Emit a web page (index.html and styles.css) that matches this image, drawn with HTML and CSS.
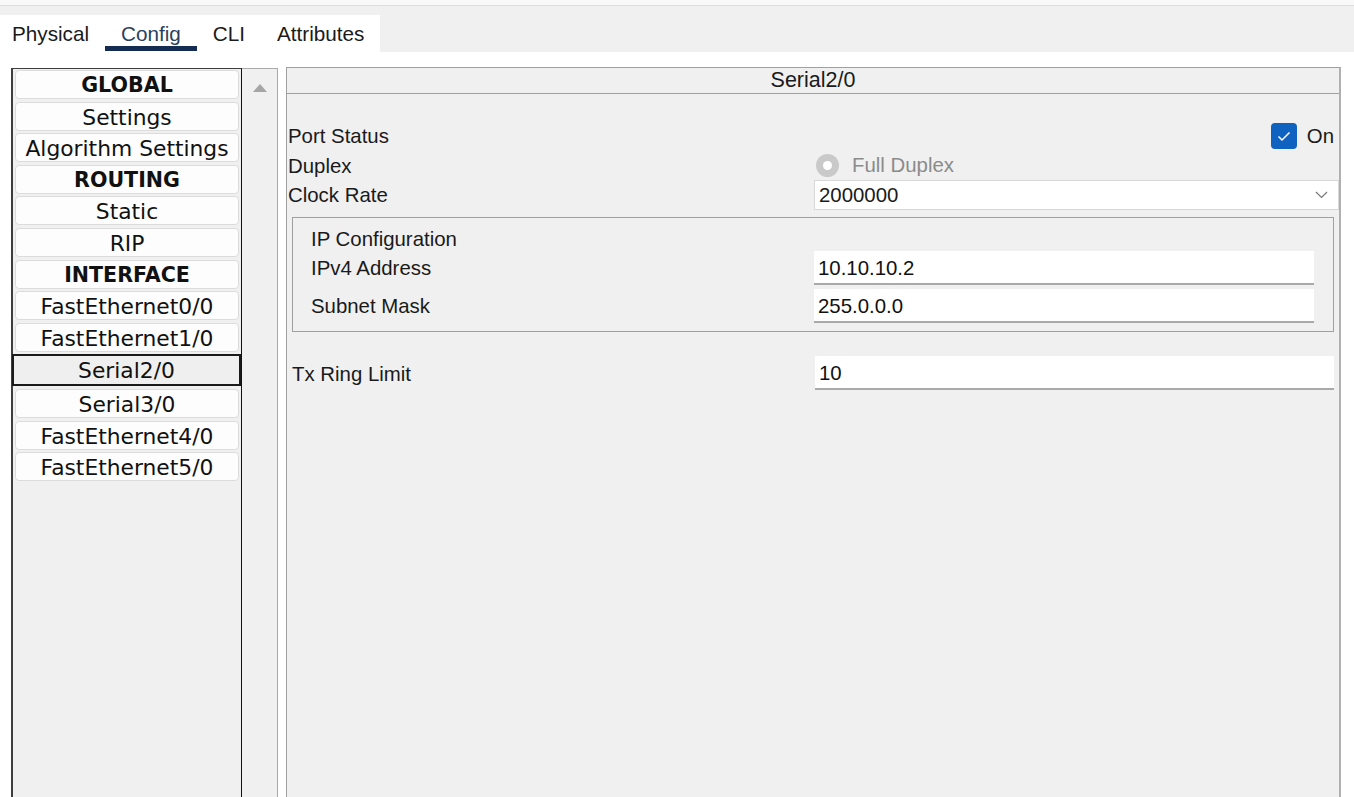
FILE: index.html
```html
<!DOCTYPE html>
<html>
<head>
<meta charset="utf-8">
<link rel="stylesheet" href="styles.css">
</head>
<body>
<div class="topstrip"></div>
<div class="tabbar">
  <div class="tabs">
    <div class="tab first">Physical</div>
    <div class="tab active">Config</div>
    <div class="tab">CLI</div>
    <div class="tab">Attributes</div>
  </div>
</div>
<div class="main">
  <div class="navlist">
    <div class="item bold">GLOBAL</div>
    <div class="item">Settings</div>
    <div class="item">Algorithm Settings</div>
    <div class="item bold">ROUTING</div>
    <div class="item">Static</div>
    <div class="item">RIP</div>
    <div class="item bold">INTERFACE</div>
    <div class="item">FastEthernet0/0</div>
    <div class="item">FastEthernet1/0</div>
    <div class="item selected">Serial2/0</div>
    <div class="item">Serial3/0</div>
    <div class="item">FastEthernet4/0</div>
    <div class="item">FastEthernet5/0</div>
  </div>
  <div class="scrollbar">
    <svg class="arrow" width="14" height="8" viewBox="0 0 14 8"><polygon points="0,8 7,0 14,8" fill="#a5a5a5"/></svg>
  </div>
  <div class="panel">
    <div class="panel-head">Serial2/0</div>
    <div class="panel-body">
      <div class="row">
        <div class="label">Port Status</div>
        <div class="value right">
          <span class="checkbox"><svg width="26" height="26" viewBox="0 0 26 26"><path d="M7.5 13.5 L11 17 L18.5 9.5" fill="none" stroke="#fff" stroke-width="1.5"/></svg></span>
          <span class="on">On</span>
        </div>
      </div>
      <div class="row">
        <div class="label">Duplex</div>
        <div class="value">
          <span class="radio"><span class="dot"></span></span>
          <span class="disabled">Full Duplex</span>
        </div>
      </div>
      <div class="row">
        <div class="label">Clock Rate</div>
        <div class="value">
          <div class="select">
            <span>2000000</span>
            <svg width="13" height="8" viewBox="0 0 13 8"><path d="M1 1 L6.5 6.5 L12 1" fill="none" stroke="#777" stroke-width="1.2"/></svg>
          </div>
        </div>
      </div>
      <div class="fieldset">
        <div class="legend">IP Configuration</div>
        <div class="frow">
          <div class="flabel">IPv4 Address</div>
          <div class="input">10.10.10.2</div>
        </div>
        <div class="frow">
          <div class="flabel">Subnet Mask</div>
          <div class="input">255.0.0.0</div>
        </div>
      </div>
      <div class="txrow">
        <div class="txlabel">Tx Ring Limit</div>
        <div class="input wide">10</div>
      </div>
    </div>
  </div>
</div>
</body>
</html>
```
FILE: styles.css
```css
* { box-sizing: border-box; }
html, body { margin: 0; padding: 0; }
body {
  background: #ffffff;
  font-family: "Liberation Sans", Arial, sans-serif;
  color: #1a1a1a;
  width: 1354px;
  height: 797px;
  overflow: hidden;
}
.topstrip {
  height: 6px;
  background: #f9f9f9;
  border-bottom: 1px solid #dcdcdc;
}
.tabbar {
  background: #f0f0f0;
  padding-top: 9px;
  height: 46px;
}
.tabs {
  display: flex;
  width: 380px;
  height: 37px;
  background: #ffffff;
}
.tab {
  padding: 7px 16px 0;
  height: 36px;
  line-height: 24px;
  font-size: 20.7px;
  border-bottom: 5px solid transparent;
  color: #1a1a1a;
}
.tab.first { padding-left: 12px; }
.tab.active {
  border-bottom-color: #142c52;
  color: #2a3f60;
}
.main {
  display: flex;
  align-items: flex-start;
  padding: 15px 0 0 11px;
  height: 745px;
  overflow: hidden;
}
.navlist {
  width: 231px;
  height: 760px;
  margin-top: 1px;
  background: #f0f0f0;
  border-left: 2px solid #3e3e3e;
  border-top: 1px solid #3e3e3e;
  border-right: 1px solid #111;
  padding: 1px 2px 0 2px;
  display: flex;
  flex-direction: column;
  gap: 2.6px;
  font-family: "DejaVu Sans", Verdana, sans-serif;
}
.item {
  height: 29px;
  line-height: 29px;
  text-align: center;
  font-size: 21.8px;
  color: #111;
  background: #fdfdfd;
  border: 1px solid #dcdcdc;
  border-radius: 4px;
  white-space: nowrap;
}
.item.bold { font-weight: bold; font-size: 20.6px; }
.item.selected {
  height: 32px;
  line-height: 29px;
  margin: 0 -2px 0 -3px;
  background: #efefef;
  border: 2px solid #1a1a1a;
  border-radius: 0;
}
.scrollbar {
  width: 36px;
  height: 760px;
  margin-top: 1px;
  background: #f0f0f0;
  border-top: 1px solid #aaaaaa;
  border-right: 1px solid #a8a8a8;
  display: flex;
  justify-content: center;
  padding-top: 15px;
}
.panel {
  margin-left: 8px;
  width: 1055px;
  height: 760px;
  background: #f0f0f0;
  border: 1px solid #a0a0a0;
  border-right: 2px solid #b0b0b0;
}
.panel-head {
  height: 26px;
  line-height: 25px;
  text-align: center;
  font-size: 21.5px;
  border-bottom: 1px solid #a0a0a0;
  color: #1a1a1a;
}
.panel-body {
  padding: 27px 0 0 1px;
  font-size: 20.4px;
}
.row {
  display: flex;
  align-items: center;
  height: 29.5px;
}
.label {
  width: 526px;
  flex: none;
  padding-top: 2px;
}
.value {
  flex: 1;
  display: flex;
  align-items: center;
}
.value.right {
  justify-content: flex-end;
  padding-right: 5px;
}
.checkbox {
  width: 26px;
  height: 26px;
  border-radius: 4px;
  background: #0f62c0;
  display: flex;
}
.on { margin-left: 10px; padding-top: 1px; }
.radio {
  margin-left: 2px;
  width: 23px;
  height: 23px;
  border-radius: 50%;
  background: #c9c9c9;
  display: flex;
  align-items: center;
  justify-content: center;
}
.dot {
  width: 9px;
  height: 9px;
  border-radius: 50%;
  background: #ffffff;
}
.disabled {
  margin-left: 13px;
  color: #8b8b8b;
}
.select {
  flex: 1;
  height: 30px;
  background: #ffffff;
  border: 1px solid #d8d8d8;
  display: flex;
  align-items: center;
  justify-content: space-between;
  padding: 1px 10px 0 4px;
}
.fieldset {
  margin: 7px 5px 0 4px;
  border: 1px solid #a0a0a0;
  padding: 8px 19px 8px 18px;
}
.legend {
  line-height: 26px;
  height: 25px;
}
.frow {
  display: flex;
  align-items: center;
  height: 34px;
}
.frow + .frow { margin-top: 4px; }
.flabel {
  width: 503px;
  flex: none;
  padding-top: 2px;
}
.input {
  flex: 1;
  height: 34px;
  line-height: 34px;
  background: #ffffff;
  border-bottom: 2px solid #a9a9a9;
  padding-left: 4px;
  color: #111;
}
.txrow {
  display: flex;
  align-items: center;
  margin: 24px 5px 0 4px;
  height: 35px;
}
.txlabel {
  width: 523px;
  flex: none;
  padding-top: 3px;
}
```
